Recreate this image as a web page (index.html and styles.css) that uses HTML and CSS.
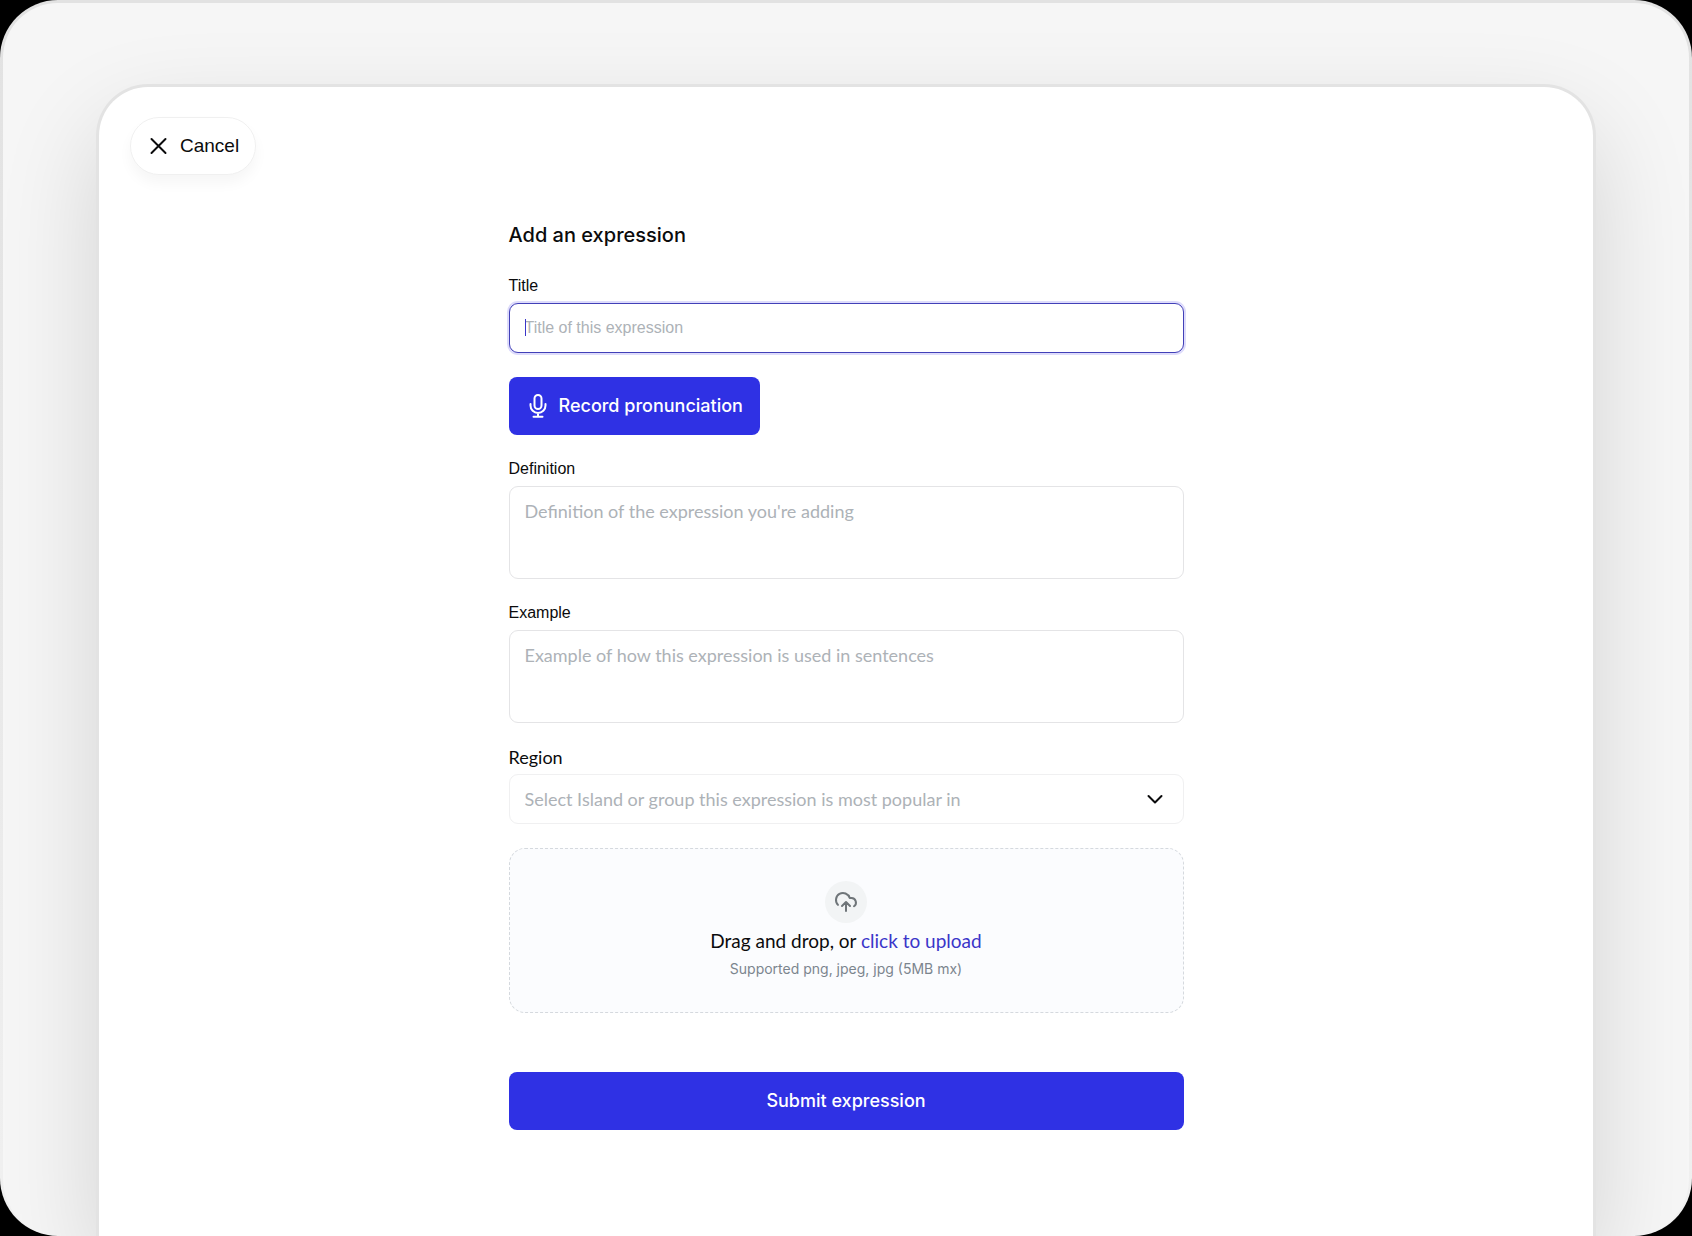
FILE: index.html
```
<!DOCTYPE html>
<html lang="en">
<head>
    <meta charset="UTF-8">
    <meta name="viewport" content="width=device-width, initial-scale=1.0">
    <title>Add an expression</title>
    <link rel="stylesheet" href="styles.css">
</head>
<body>
    <div class="frame">
        <main class="sheet">
            <button type="button" class="btn btn-cancel">
                <svg class="icon" viewBox="0 0 24 24" aria-hidden="true"><path d="M4.5 5l14 14M18.5 5l-14 14"/></svg>
                Cancel
            </button>

            <form class="form">
                <h1>Add an expression</h1>

                <div class="field">
                    <label for="title">Title</label>
                    <div class="control-wrap">
                        <input type="text" id="title" class="control" placeholder="Title of this expression" autofocus>
                        <span class="caret"></span>
                    </div>
                </div>

                <button type="button" class="btn btn-primary">
                    <svg class="icon" viewBox="0 0 24 24" aria-hidden="true">
                        <rect x="8.5" y="1" width="7" height="14" rx="3.5"/>
                        <path d="M4.5 10v1.5a7.5 7.5 0 0 0 15 0V10M12 19v3.5M7.5 22.8h9"/>
                    </svg>
                    Record pronunciation
                </button>

                <div class="field">
                    <label for="definition">Definition</label>
                    <textarea id="definition" class="control" placeholder="Definition of the expression you're adding"></textarea>
                </div>

                <div class="field">
                    <label for="example">Example</label>
                    <textarea id="example" class="control" placeholder="Example of how this expression is used in sentences"></textarea>
                </div>

                <div class="field">
                    <label for="region" class="label-region">Region</label>
                    <div class="control-wrap">
                        <select id="region" class="control">
                            <option value="">Select Island or group this expression is most popular in</option>
                        </select>
                        <svg class="icon chevron" viewBox="0 0 24 24" aria-hidden="true"><path d="M5.5 9l6.500 6.500L18.500 9"/></svg>
                    </div>
                </div>

                <label class="dropzone" for="image">
                    <input type="file" id="image" class="file" accept=".png,.jpeg,.jpg">
                    <span class="dropzone-icon">
                        <svg class="icon" viewBox="0 0 24 24" aria-hidden="true">
                            <path d="M4 14.9A7 7 0 1 1 15.7 8h1.8a4.5 4.5 0 0 1 2.5 8.2"/>
                            <path d="M12 12v9M16 16l-4-4-4 4"/>
                        </svg>
                    </span>
                    <span class="dropzone-text">Drag and drop, or <span class="accent">click to upload</span></span>
                    <span class="dropzone-hint">Supported png, jpeg, jpg (5MB mx)</span>
                </label>

                <button type="submit" class="btn btn-primary btn-submit">Submit expression</button>
            </form>
        </main>
    </div>
</body>
</html>
```
FILE: styles.css
```
* {
    box-sizing: border-box;
}
html {
    background: #000;
}
body {
    margin: 0;
    color: #0b0b0c;
    font-family: Lato, sans-serif;
}
.frame {
    display: flex;
    min-height: 100vh;
    padding: 81px 93px 0;
    border: 3px solid transparent;
    border-bottom: 0;
    border-radius: 58px;
    background: linear-gradient(#f6f6f6, #f6f6f6) padding-box, linear-gradient(#e2e2e2, #e8e8e8 50%, #f0f0f0) border-box;
    overflow: hidden;
}
.sheet {
    flex: 1;
    min-width: 0;
    padding: 30px 31px 105px;
    border: 3px solid #e3e3e3;
    border-bottom: 0;
    border-radius: 52px 52px 0 0;
    background: #fff;
    box-shadow: 0 40px 100px rgba(0, 0, 0, 0.14);
}
.icon {
    width: 24px;
    height: 24px;
    flex: none;
    fill: none;
    stroke: currentColor;
    stroke-width: 2;
    stroke-linecap: round;
    stroke-linejoin: round;
}

/* buttons */
.btn {
    display: flex;
    align-items: center;
    justify-content: center;
    gap: 9px;
    height: 58px;
    padding: 0 16px;
    border: 1px solid transparent;
    cursor: pointer;
}
.btn-cancel {
    border-color: #f0f0f0;
    border-radius: 29px;
    background: #fff;
    color: #0b0b0c;
    font: 19px/24px "Liberation Sans", Arial, sans-serif;
    box-shadow: 0 8px 14px rgba(0, 0, 0, 0.04);
}
.btn-primary {
    align-self: flex-start;
    border-radius: 8px;
    background: #2f31e4;
    color: #fff;
    font: 500 18px/24px Inter, sans-serif;
}
.btn-submit {
    align-self: stretch;
    margin-top: 35px;
}

/* form */
.form {
    display: flex;
    flex-direction: column;
    gap: 24px;
    max-width: 675px;
    margin: 46px auto 0;
}
h1 {
    margin: 0 0 3px;
    font: 500 20px/28px Inter, sans-serif;
}
.field {
    display: flex;
    flex-direction: column;
    gap: 7px;
}
.field label {
    font: 16px/20px "Liberation Sans", Arial, sans-serif;
}
.field .label-region {
    font: 18px/20px Lato, sans-serif;
}
.control-wrap {
    position: relative;
}
.control {
    display: block;
    width: 100%;
    height: 50px;
    padding: 12px 15px;
    border: 1px solid #e4e4e6;
    border-radius: 9px;
    outline: 0;
    background: #fff;
    color: #0b0b0c;
    font: 18px/24px Lato, sans-serif;
}
.control::placeholder {
    color: #adb2b7;
    opacity: 1;
}
#title {
    font: 16px/24px "Liberation Sans", Arial, sans-serif;
    caret-color: transparent;
}
#title:focus {
    border-color: #4240b8;
    box-shadow: 0 0 0 2px #dedcfb;
}
.caret {
    position: absolute;
    top: 16px;
    left: 16px;
    width: 1px;
    height: 17px;
    background: #3a35c9;
}
textarea.control {
    height: 93px;
    resize: none;
}
select.control {
    appearance: none;
    border-color: #f0f0f1;
    color: #adb2b7;
}
.chevron {
    position: absolute;
    top: 13px;
    right: 17px;
    pointer-events: none;
}

/* upload */
.dropzone {
    display: flex;
    flex-direction: column;
    align-items: center;
    gap: 4px;
    padding: 32px 16px 33px;
    border: 1px dashed #d5d9de;
    border-radius: 16px;
    background: #fbfcfe;
    cursor: pointer;
}
.file {
    position: absolute;
    width: 1px;
    height: 1px;
    opacity: 0;
}
.dropzone-icon {
    display: flex;
    align-items: center;
    justify-content: center;
    width: 42px;
    height: 42px;
    border-radius: 50%;
    background: #f2f4f5;
    color: #6f7579;
}
.dropzone-text {
    font-size: 19px;
    line-height: 28px;
}
.accent {
    color: #3a35c9;
}
.dropzone-hint {
    color: #7b858e;
    font: 14px/20px Inter, sans-serif;
}
```
